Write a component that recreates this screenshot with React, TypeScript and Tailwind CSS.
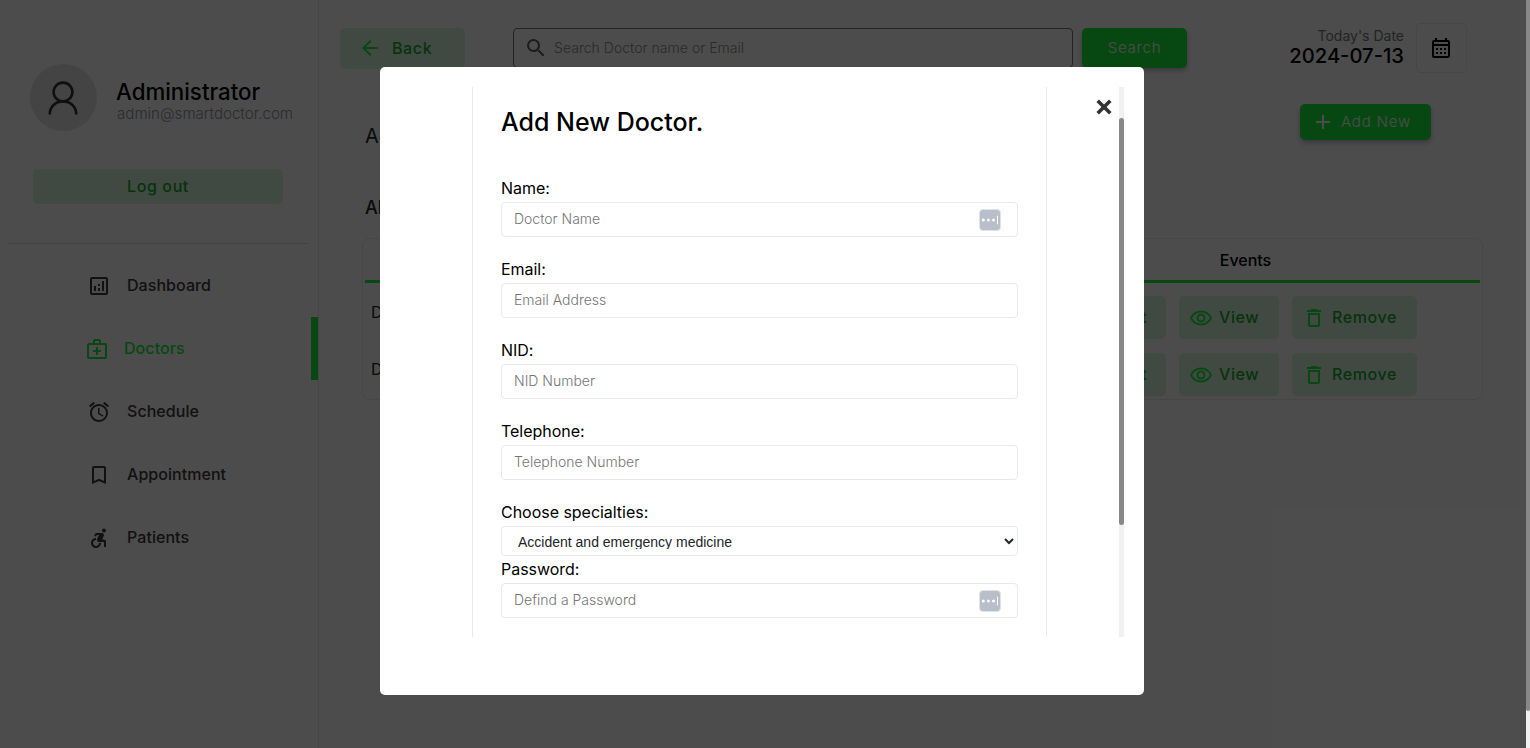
import type { ReactNode } from "react";
import {
  MdAdd,
  MdArrowBack,
  MdBookmarkBorder,
  MdDeleteOutline,
  MdOutlineAnalytics,
  MdOutlineCalendarMonth,
  MdOutlineMedicalServices,
  MdOutlineRemoveRedEye,
  MdSearch,
  MdAccessAlarm,
  MdAccessibleForward,
  MdOutlineEdit,
} from "react-icons/md";

function NavItem({ icon, label, active }: { icon: ReactNode; label: string; active?: boolean }) {
  return (
    <li
      className={
        active
          ? "flex h-[63px] items-center border-r-[7px] border-[#18f03c] pl-[85px] text-[#18f03c]"
          : "flex h-[63px] items-center pl-[87px] text-[#3b3b3b]"
      }
    >
      <span className="mt-px shrink-0 text-2xl">{icon}</span>
      <span
        className={
          active
            ? "mb-[2px] ml-[15px] text-base font-medium tracking-[0.07px]"
            : "mb-[2px] ml-4 text-base font-medium tracking-[0.05px]"
        }
      >
        {label}
      </span>
    </li>
  );
}

function Sidebar() {
  return (
    <aside className="flex w-[319px] shrink-0 flex-col border-r border-[#ebebeb]">
      <div className="mt-16 ml-[30px] flex items-center">
        <div className="flex size-[67px] items-center justify-center rounded-full bg-[#e3e3e3] pr-px">
          <svg viewBox="0 0 30 34" className="h-[34px] w-[30px]" fill="none" stroke="#333" strokeWidth="2.6">
            <circle cx="15" cy="11" r="9.4" />
            <path d="M1.7 33.6C1.7 25.5 7.6 20.4 15 20.4S28.3 25.500 28.3 33.6" />
          </svg>
        </div>
        <div className="mt-[9px] ml-[19px]">
          <p className="pb-px text-[22.3px] leading-[22px] font-medium text-black">Administrator</p>
          <p className="pl-px text-[15.1px] leading-[20px] font-light text-[#8f91a0]">admin@smartdoctor.com</p>
        </div>
      </div>
      <button className="mt-[38px] ml-[33px] h-[35px] w-[250px] rounded-[5px] bg-[#d8f9dc] pb-0.5 text-base font-medium tracking-[0.6px] text-[#18a82d]">
        Log out
      </button>
      <div className="mt-[39px] ml-2 w-[300px] border-t border-[#dedede]" />
      <ul className="mt-[10px]">
        <NavItem icon={<MdOutlineAnalytics />} label="Dashboard" />
        <NavItem icon={<MdOutlineMedicalServices />} label="Doctors" active />
        <NavItem icon={<MdAccessAlarm />} label="Schedule" />
        <NavItem icon={<MdBookmarkBorder />} label="Appointment" />
        <NavItem icon={<MdAccessibleForward />} label="Patients" />
      </ul>
    </aside>
  );
}

function DoctorRow({ name }: { name: string }) {
  const button = "flex h-[43px] items-center rounded-[5px] bg-[#d8f9dc] text-base font-medium tracking-[0.6px] text-[#18a82d]";
  return (
    <div className="flex h-[57px] items-center">
      <span className="mb-[12px] w-[691px] pl-1.5 text-base">{name}</span>
      <div className="flex gap-[13px]">
        <button className={`${button} w-[110px] pl-6`}>
          <MdOutlineEdit className="mr-3 size-6 text-[#18f03c]" />
          <span className="mb-0.5">Edit</span>
        </button>
        <button className={`${button} w-[100px] pl-2.5`}>
          <MdOutlineRemoveRedEye className="mr-1.5 size-6 text-[#18f03c]" />
          <span className="mb-0.5">View</span>
        </button>
        <button className={`${button} w-[125px] pl-2.5`}>
          <MdDeleteOutline className="mr-1.5 size-6 text-[#18f03c]" />
          <span className="mb-0.5">Remove</span>
        </button>
      </div>
    </div>
  );
}

function Main() {
  return (
    <main className="flex min-w-0 flex-1 flex-col">
      <div className="mt-[23px] flex items-start pl-[21px]">
        <button className="mt-[5px] flex h-[41px] w-[125px] items-center rounded-[5px] bg-[#d8f9dc] pb-px pl-[18px] text-base font-medium tracking-[0.6px] text-[#18a82d]">
          <MdArrowBack className="mr-2.5 size-6 text-[#18f03c]" />
          Back
        </button>
        <div className="mt-[5px] ml-12 flex h-10 w-[560px] items-center rounded-[4px] border border-[#767676] pl-[10px]">
          <MdSearch className="mr-[6px] size-6 text-[#5e5e5e]" />
          <span className="text-sm font-light tracking-[0.03px] text-[#8c8c8c]">Search Doctor name or Email</span>
        </div>
        <button className="mt-[5px] ml-[9px] h-10 w-[105px] rounded-[5px] bg-[#18f03c] text-[15px] font-light tracking-[0.8px] text-white shadow-[0_3px_5px_#3939a855]">
          Search
        </button>
        <div className="mt-1.5 w-[217px] text-right">
          <p className="text-sm leading-[14px] text-[#777777]">Today's Date</p>
          <p className="text-[20.2px] leading-[26px] font-medium text-black">2024-07-13</p>
        </div>
        <div className="ml-3 flex h-[50px] w-[51px] items-center justify-center rounded-[5px] border border-[#ebebef] pr-px">
          <MdOutlineCalendarMonth className="size-6 text-black" />
        </div>
      </div>
      <div className="mt-[31px] flex h-[36px] items-start justify-between pr-[99px] pl-[46px]">
        <h2 className="mt-[18px] text-[20px] leading-[28px]">Add New Doctor</h2>
        <button className="flex h-[36px] w-[131px] items-center rounded-[5px] bg-[#18f03c] pl-[11px] text-[15px] font-light tracking-[0.8px] text-white shadow-[0_3px_5px_#3939a855]">
          <MdAdd className="mr-1.5 size-6" />
          Add New
        </button>
      </div>
      <h2 className="mt-[55px] pl-[46px] text-[18px] leading-[26px] font-medium">All Doctors (2)</h2>
      <section className="mt-[17px] ml-[43px] flex h-[162px] w-[1121px] flex-col rounded-[8px] border border-[#ebebeb] px-0.5 pt-0.5">
        <div className="flex h-[42px] shrink-0 items-center justify-end border-b-[3px] border-[#18f03c] pb-0.5 text-base font-medium text-black">
          <span className="w-[469px] text-center">Events</span>
        </div>
        <div className="mt-[6px]">
          <DoctorRow name="Doctor One" />
          <DoctorRow name="Doctor Two" />
        </div>
      </section>
    </main>
  );
}

function AutofillBadge() {
  return (
    <svg viewBox="0 0 22 22" className="size-[22px]">
      <rect x="0.5" y="0.5" width="21" height="21" rx="3.5" fill="#b9bfca" stroke="#dfe2e8" />
      <circle cx="4.300" cy="11" r="1.5" fill="#fff" />
      <circle cx="9.400" cy="11" r="1.5" fill="#fff" />
      <circle cx="14.500" cy="11" r="1.5" fill="#fff" />
      <rect x="18" y="6.700" width="1" height="8.600" fill="#fff" />
    </svg>
  );
}

function Field({ label, hint, badge }: { label: string; hint: string; badge?: boolean }) {
  return (
    <label className="flex flex-col">
      <span className="h-[27px] text-base leading-[26px] tracking-[-0.03px] text-black">{label}</span>
      <span className="flex h-[35px] items-center justify-between rounded-[4px] border border-[#e9e9ea] pr-4 pl-3">
        <span className="mb-[2px] text-sm font-light text-[#757575]">{hint}</span>
        {badge && <AutofillBadge />}
      </span>
    </label>
  );
}

function Modal() {
  return (
    <div className="flex h-[628px] w-[764px] rounded-[5px] bg-white pt-5 pl-[92px]">
      <div className="flex h-[550px] w-[575px] flex-col border-x border-[#e9e9ea] px-7">
        <h1 className="mt-5 text-[25px] leading-[30px] font-medium text-black">Add New Doctor.</h1>
        <div className="mt-[38px] flex flex-col gap-[19px]">
          <Field label="Name:" hint="Doctor Name" badge />
          <Field label="Email:" hint="Email Address" />
          <Field label="NID:" hint="NID Number" />
          <Field label="Telephone:" hint="Telephone Number" />
        </div>
        <div className="mt-[19px] flex flex-col">
          <span className="h-[27px] text-base leading-[26px] tracking-[-0.03px] text-black">Choose specialties:</span>
          <div className="flex h-[30px] items-center justify-between rounded-[4px] border border-[#e9e9ea] pr-[3px] pl-4">
            <span className="h-[15px] overflow-hidden font-['Liberation_Sans',sans-serif] text-[14px] leading-[16px] text-[#212529]">
              Accident and emergency medicine
            </span>
            <svg viewBox="0 0 10 7" className="h-[7px] w-[10px]" fill="none" stroke="#212529" strokeWidth="2">
              <path d="M1 1l4 4 4-4" />
            </svg>
          </div>
        </div>
        <Field label="Password:" hint="Defind a Password" badge />
      </div>
      <button className="mt-[12px] ml-[49px] flex size-4 items-center justify-center">
        <svg viewBox="0 0 16 16" className="size-4" stroke="#333" strokeWidth="3.6">
          <path d="M1.700 1.700l12.600 12.600M14.300 1.700L1.700 14.300" />
        </svg>
      </button>
      <div className="ml-[7px] h-[550px] w-[5px] bg-[#f1f1f1] pt-[31px]">
        <div className="h-[407px] rounded-full bg-[#888]" />
      </div>
    </div>
  );
}

export default function App() {
  return (
    <div className="relative h-[748px] w-[1530px] overflow-hidden bg-white font-['Inter',sans-serif] text-[#212529]">
      <div className="flex h-full">
        <Sidebar />
        <Main />
      </div>
      <div className="absolute inset-0 flex items-start bg-black/70 pt-[67px] pl-[380px]">
        <Modal />
      </div>
      <div className="absolute top-0 right-0 h-full w-1 bg-[#f1f1f1]">
        <div className="h-[711px] rounded-b-full bg-[#888]" />
      </div>
    </div>
  );
}
